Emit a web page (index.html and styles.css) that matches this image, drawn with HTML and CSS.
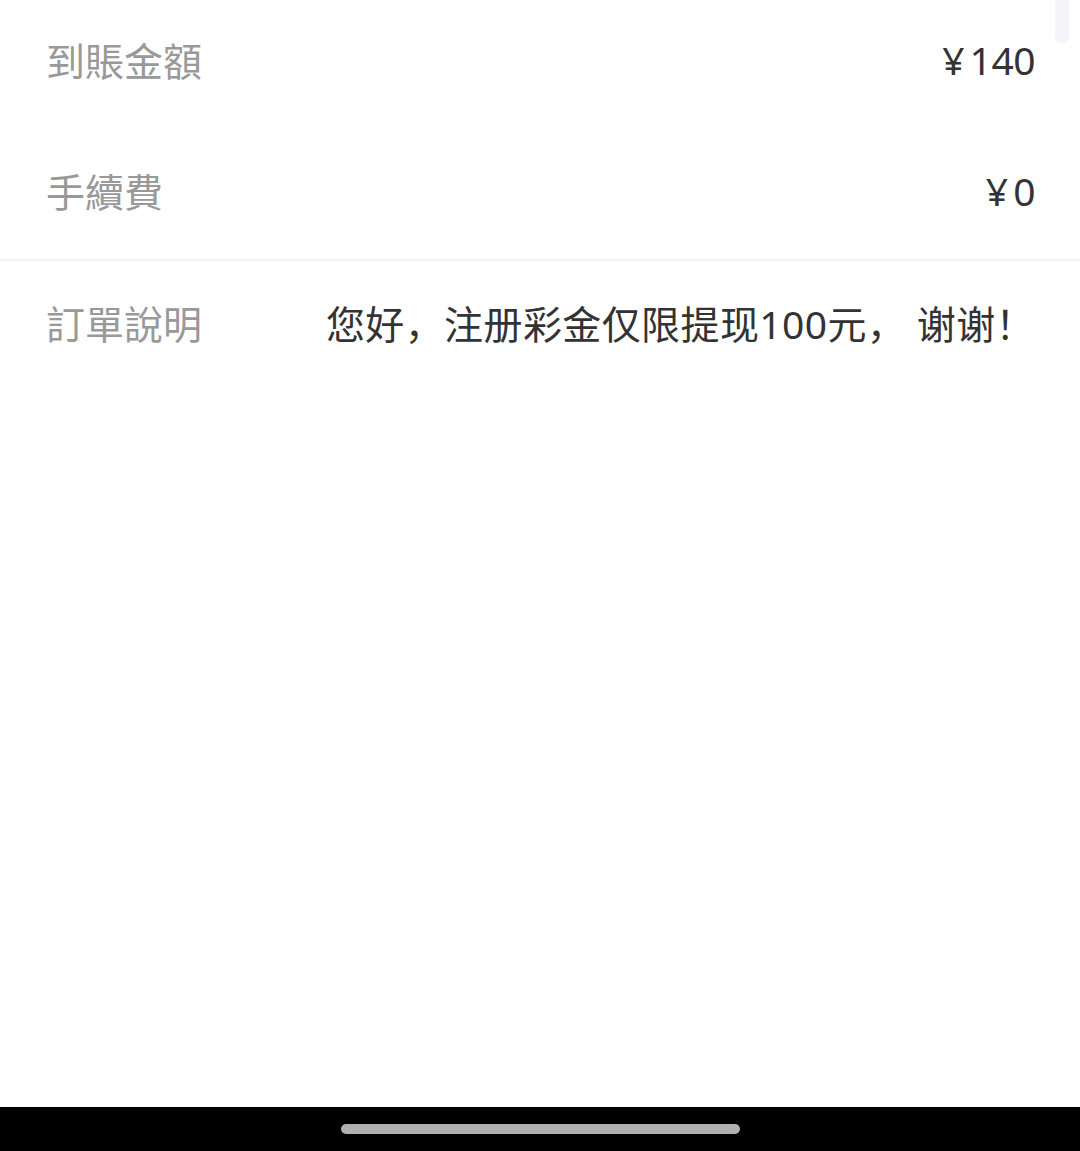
FILE: index.html
```html
<!DOCTYPE html>
<html lang="zh">
<head>
  <meta charset="UTF-8" />
  <meta name="viewport" content="width=device-width, initial-scale=1.0" />
  <title>訂單詳情</title>
  <link rel="stylesheet" href="styles.css">
</head>
<body>
  <div class="page">
    <div class="scroll-thumb"></div>

    <div class="detail-list">
      <div class="row">
        <span class="label">到賬金額</span>
        <span class="value amount">¥ 140</span>
      </div>
      <div class="row">
        <span class="label">手續費</span>
        <span class="value amount">¥ 0</span>
      </div>
      <div class="row row-note">
        <span class="label">訂單說明</span>
        <span class="value note">您好，注册彩金仅限提现100元， 谢谢！</span>
      </div>
    </div>
  </div>

  <div class="nav-bar">
    <div class="nav-handle"></div>
  </div>
</body>
</html>
```

FILE: styles.css
```css
html,
body {
  margin: 0;
  height: 100%;
}

body {
  display: flex;
  flex-direction: column;
  background: #fff;
  font-family: "Noto Sans", "Noto Sans CJK SC", sans-serif;
  color: #333;
}

.page {
  flex: 1;
  position: relative;
}

.scroll-thumb {
  position: absolute;
  top: -10px;
  right: 11px;
  width: 14px;
  height: 54px;
  border-radius: 7px;
  background: #f3f5fa;
}

.detail-list {
  margin-top: -3px;
}

.row {
  box-sizing: border-box;
  display: flex;
  align-items: center;
  height: 131px;
  padding: 0 45px 7px 46px;
  font-size: 39px;
}

.row-note {
  border-top: 2px solid #f2f4f5;
}

.label {
  flex-shrink: 0;
  color: #999;
  font-family: "Noto Sans CJK TC", sans-serif;
}

.value {
  flex: 1;
  text-align: right;
  color: #333;
}

.amount {
  word-spacing: -4px;
  letter-spacing: -0.5px;
}

.note {
  letter-spacing: 0.4px;
}

.nav-bar {
  height: 44px;
  background: #000;
  display: flex;
  justify-content: center;
  align-items: center;
}

.nav-handle {
  width: 399px;
  height: 10px;
  border-radius: 5px;
  background: #b0b0b0;
}
```
